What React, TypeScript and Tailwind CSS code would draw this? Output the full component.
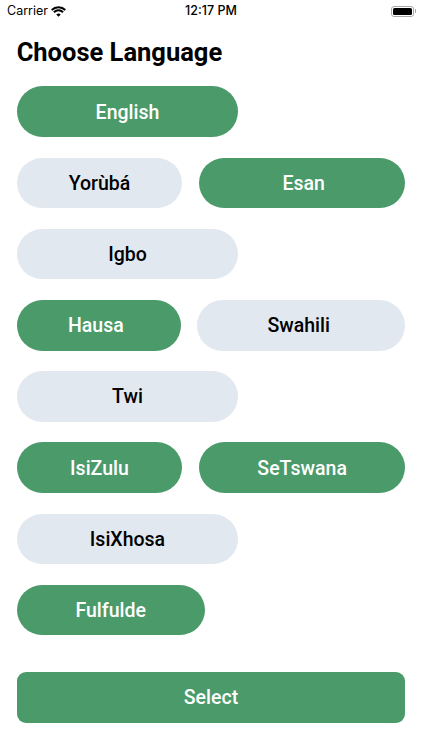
import { ReactNode } from "react";

const green = "bg-[#4a9a6a] text-white";
const grey = "bg-[#e2e8f0] text-black";

function Pill({ w, on, children }: { w: string; on?: boolean; children: ReactNode }) {
    return (
        <button className={`${w} h-[50.67px] rounded-[26px] flex items-center justify-center pt-px text-[19.5px] font-medium ${on ? green : grey}`}>
            {children}
        </button>
    );
}

function Wifi() {
    return (
        <svg width="15" height="11" viewBox="0 -0.5 16 11.7" fill="none" stroke="black">
            <path d="M0.72 3.72A10.3 10.3 0 0 1 15.28 3.72" strokeWidth="2.1" />
            <path d="M3.12 6.12A6.9 6.9 0 0 1 12.88 6.12" strokeWidth="2.1" />
            <path d="M8 11L5.6 8.6A3.4 3.4 0 0 1 10.4 8.6Z" fill="black" stroke="none" />
        </svg>
    );
}

function Battery() {
    return (
        <div className="flex items-center gap-px">
            <div className="w-[23px] h-[11px] rounded-[3px] border border-[#a8a8a8] p-px">
                <div className="w-full h-full rounded-[1.5px] bg-black" />
            </div>
            <div className="w-[1px] h-[4px] bg-[#a8a8a8]" />
        </div>
    );
}

export default function App() {
    return (
        <div className="w-[422px] h-[750px] bg-white overflow-hidden font-['Roboto',sans-serif]">
            <div className="h-[22px] pl-[7px] pr-[6px] grid grid-cols-3 items-center font-['Inter',sans-serif] text-[12.5px] text-black">
                <div className="flex items-center gap-[3px]">
                    <span>Carrier</span>
                    <Wifi />
                </div>
                <div className="text-center font-medium pr-[1px]">12:17 PM</div>
                <div className="flex justify-end">
                    <Battery />
                </div>
            </div>
            <div className="pl-[16.67px]">
                <h1 className="mt-[15px] h-[30px] leading-[30px] text-[25.5px] font-bold text-black">Choose Language</h1>
                <div className="mt-[19.3px] flex flex-col gap-[20.57px]">
                    <div className="flex"><Pill w="w-[221.67px]" on>English</Pill></div>
                    <div className="flex gap-[16.67px]">
                        <Pill w="w-[165.67px]">Yorùbá</Pill>
                        <Pill w="w-[206.33px] pl-[3px]" on>Esan</Pill>
                    </div>
                    <div className="flex"><Pill w="w-[221.67px]">Igbo</Pill></div>
                    <div className="flex gap-[16px]">
                        <Pill w="w-[164.33px] pr-[6px]" on>Hausa</Pill>
                        <Pill w="w-[208.33px] pr-[5px]">Swahili</Pill>
                    </div>
                    <div className="flex"><Pill w="w-[221.67px]">Twi</Pill></div>
                    <div className="flex gap-[16.67px]">
                        <Pill w="w-[165.67px]" on>IsiZulu</Pill>
                        <Pill w="w-[206.33px]" on>SeTswana</Pill>
                    </div>
                    <div className="flex"><Pill w="w-[221.67px]">IsiXhosa</Pill></div>
                    <div className="flex"><Pill w="w-[188px]" on>Fulfulde</Pill></div>
                </div>
                <button className={`mt-[36.3px] w-[388.67px] h-[51px] rounded-[9px] flex items-center justify-center pt-px text-[19.5px] font-medium ${green}`}>
                    Select
                </button>
            </div>
        </div>
    );
}
